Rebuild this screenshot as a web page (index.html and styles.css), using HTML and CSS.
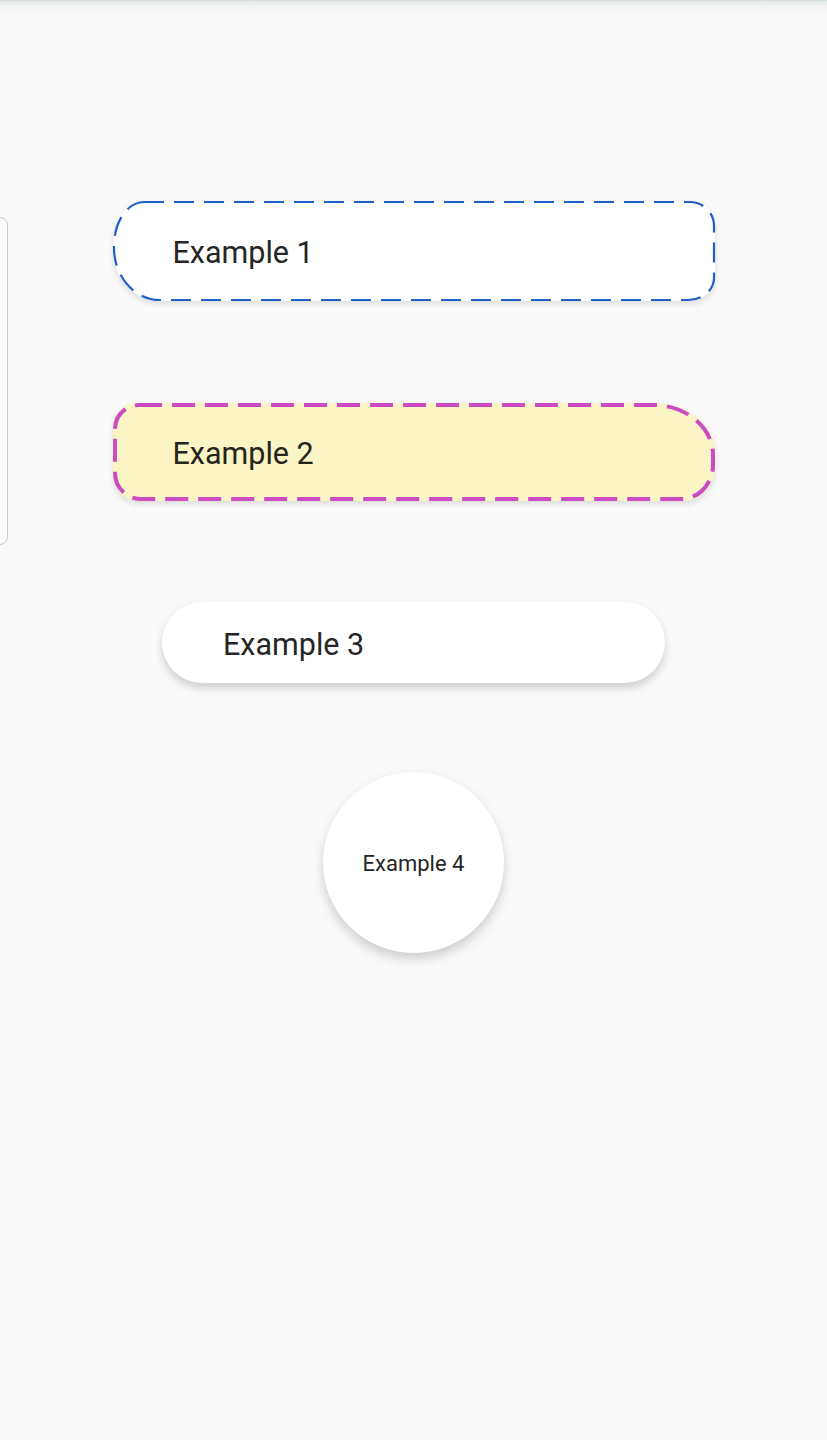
FILE: index.html
```html
<!DOCTYPE html>
<html>
<head>
<meta charset="utf-8">
<link rel="stylesheet" href="styles.css">
</head>
<body>
<div class="topshade"></div>
<div class="sidecard"></div>
<main class="stage">
  <div class="chip chip-one">
    <svg class="outline" width="602" height="100" viewBox="0 0 602 100">
      <path d="M31,1 H577 A24 24 0 0 1 601 25 V77 A26 22 0 0 1 575 99 H47 A46 52 0 0 1 1 47 V45 A30 44 0 0 1 31 1 Z" fill="none" stroke="#1f5fc8" stroke-width="2.2" stroke-dasharray="20 10"/>
    </svg>
    <span>Example 1</span>
  </div>
  <div class="chip chip-two">
    <svg class="outline" width="602" height="98" viewBox="0 0 602 98">
      <path d="M26,2 H540 A60 50 0 0 1 600 52 V62 A32 34 0 0 1 568 96 H28 A26 26 0 0 1 2 70 V26 A24 24 0 0 1 26 2 Z" fill="none" stroke="#cc4bc0" stroke-width="4" stroke-dasharray="23 10"/>
    </svg>
    <span>Example 2</span>
  </div>
  <div class="chip chip-three"><span>Example 3</span></div>
  <div class="chip chip-four"><span>Example 4</span></div>
</main>
</body>
</html>
```
FILE: styles.css
```css
html, body {
  margin: 0;
  padding: 0;
  background: #fafafa;
  font-family: Roboto, "Noto Sans", "Liberation Sans", sans-serif;
}
body {
  width: 827px;
  height: 1440px;
  position: relative;
  overflow: hidden;
}
.topshade {
  position: absolute;
  left: 0; top: 0; right: 0;
  height: 14px;
  background: linear-gradient(#d4dcdc 0, #e6eaea 2px, #f2f3f3 6px, #fafafa 14px);
}
.sidecard {
  position: absolute;
  left: -40px;
  top: 217px;
  width: 46px;
  height: 326px;
  border: 1px solid #c9c9c9;
  border-radius: 8px;
  background: #fafafa;
}
.stage {
  display: flex;
  flex-direction: column;
  align-items: center;
  padding-top: 201px;
}
.chip {
  box-sizing: border-box;
  position: relative;
  color: #262626;
  background: #fff;
  display: flex;
  align-items: center;
  font-size: 30.5px;
  padding-top: 2px;
}
.outline {
  position: absolute;
  left: 0;
  top: 0;
  overflow: visible;
}
.chip-one {
  width: 602px;
  height: 100px;
  padding-left: 60px;
  border-radius: 30px 24px 26px 46px / 44px 24px 22px 52px;
  box-shadow: 0 3px 6px rgba(0,0,0,0.12);
}
.chip-two {
  margin-top: 102px;
  width: 602px;
  height: 98px;
  padding-left: 60px;
  background: #fbf4c4;
  color: #26251c;
  border-radius: 24px 60px 32px 26px / 24px 50px 34px 26px;
  box-shadow: 0 3px 6px rgba(0,0,0,0.12);
}
.chip-three {
  margin-top: 101px;
  width: 503px;
  height: 81px;
  padding-left: 61px;
  padding-top: 3px;
  border-radius: 41px;
  box-shadow: 0 5px 10px rgba(0,0,0,0.18);
}
.chip-four {
  margin-top: 89px;
  width: 181px;
  height: 181px;
  border-radius: 50%;
  justify-content: center;
  font-size: 22px;
  box-shadow: 0 6px 12px rgba(0,0,0,0.18);
}
```
